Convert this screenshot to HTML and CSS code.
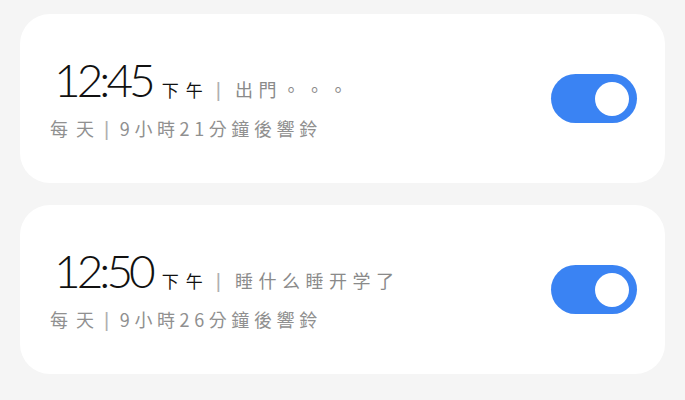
FILE: index.html
```html
<!DOCTYPE html>
<html lang="zh-Hant">
<head>
  <meta charset="UTF-8">
  <title>鬧鐘</title>
  <link rel="stylesheet" href="styles.css">
</head>
<body>

  <div class="alarm-list">
    <div class="alarm-card">
      <div class="alarm-info">
        <div class="alarm-top">
          <span class="time">12:45</span>
          <span class="ampm">下午</span>
          <span class="sep">|</span>
          <span class="label">出門。。。</span>
        </div>
        <div class="alarm-sub">
          <span class="repeat">每天</span>
          <span class="sep">|</span>
          <span>9小時21分鐘後響鈴</span>
        </div>
      </div>
      <div class="switch on"><div class="knob"></div></div>
    </div>

    <div class="alarm-card">
      <div class="alarm-info">
        <div class="alarm-top">
          <span class="time">12:50</span>
          <span class="ampm">下午</span>
          <span class="sep">|</span>
          <span class="label">睡什么睡开学了</span>
        </div>
        <div class="alarm-sub">
          <span class="repeat">每天</span>
          <span class="sep">|</span>
          <span>9小時26分鐘後響鈴</span>
        </div>
      </div>
      <div class="switch on"><div class="knob"></div></div>
    </div>
  </div>

</body>
</html>
```

FILE: styles.css
```css
body {
  margin: 0;
  padding: 0;
  background-color: #f5f5f5;
  font-family: 'Noto Sans CJK TC', 'Noto Sans CJK SC', sans-serif;
}

.alarm-list {
  display: flex;
  flex-direction: column;
  gap: 22px;
  padding: 14px 20px 0;
}

.alarm-card {
  background-color: #fff;
  border-radius: 30px;
  height: 169px;
  box-sizing: border-box;
  display: flex;
  align-items: center;
  justify-content: space-between;
  padding: 0 28px 0 30px;
}

.alarm-top {
  display: flex;
  align-items: baseline;
  height: 44px;
}

.time {
  font-family: Lato, 'Liberation Sans', sans-serif;
  font-weight: 300;
  font-size: 46px;
  letter-spacing: -4px;
  line-height: 1;
  color: #111;
  margin-left: 4px;
  margin-right: 10px;
}

.ampm {
  font-size: 17px;
  letter-spacing: 7px;
  color: #111;
}

.sep {
  font-family: 'Liberation Sans', sans-serif;
  color: #b0b0b0;
}

.alarm-top .sep {
  font-size: 20px;
  margin-left: 6px;
  margin-right: 14px;
}

.label {
  font-size: 18px;
  letter-spacing: 5.5px;
  color: #8a8a8a;
}

.alarm-sub {
  margin-top: 14px;
  font-size: 18px;
  letter-spacing: 4.6px;
  color: #909090;
  display: flex;
  align-items: baseline;
}

.repeat {
  letter-spacing: 8px;
}

.alarm-sub .sep {
  font-size: 20px;
  margin: 0 6px 0 2px;
}

.switch {
  width: 86px;
  height: 49px;
  border-radius: 25px;
  background-color: #3a83f3;
  display: flex;
  align-items: center;
  justify-content: flex-end;
  padding: 0 8px;
  box-sizing: border-box;
}

.knob {
  width: 34px;
  height: 34px;
  border-radius: 50%;
  background-color: #fff;
}
```
